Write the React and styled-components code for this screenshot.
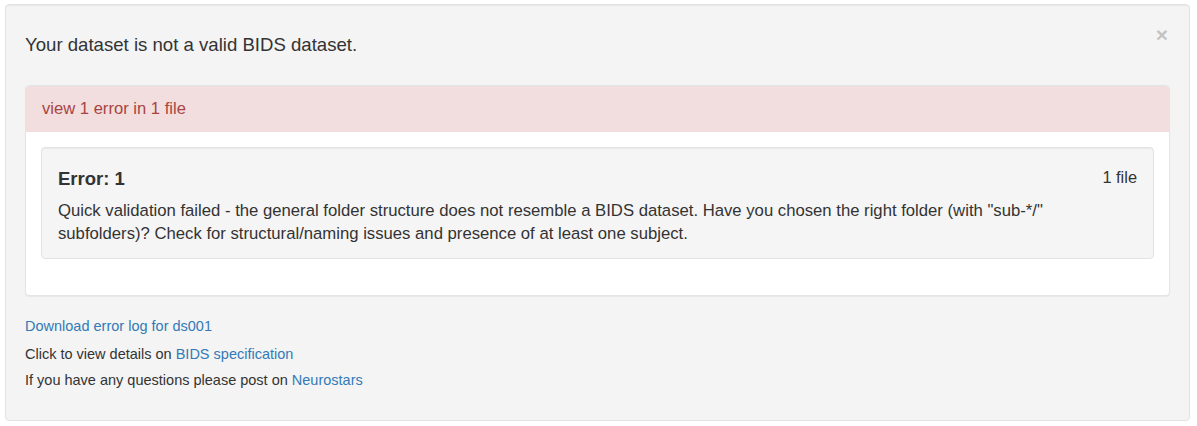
import React from "react";
import styled, { createGlobalStyle } from "styled-components";

const Global = createGlobalStyle`
  html, body { margin: 0; padding: 0; background: #fff; }
  body {
    font-family: "Liberation Sans", Arial, Helvetica, sans-serif;
    font-size: 16px;
    line-height: 1.42857;
    color: #333;
  }
`;

const Page = styled.div`
  padding: 4px 7px 6px 5px;
`;

const Well = styled.div`
  background: ${(p) => (p.$inner ? "#f5f5f5" : "#f4f4f4")};
  border: 1px solid #e3e3e3;
  border-radius: 4px;
  box-shadow: inset 0 1px 1px rgba(0, 0, 0, 0.05);
  padding: ${(p) => (p.$inner ? "16px 16px 13px" : "19px 19px 20px")};
  margin-bottom: ${(p) => (p.$inner ? "20px" : "0")};
`;

const TitleRow = styled.div`
  display: flex;
  justify-content: space-between;
  align-items: flex-start;
  margin: 10px 0 29px;
`;

const Title = styled.h4`
  margin: 0;
  font-size: 18.6px;
  font-weight: 400;
  line-height: 22px;
`;

const Close = styled.button`
  border: 0;
  background: none;
  padding: 0;
  margin: -10px 2px 0 0;
  font-family: inherit;
  font-size: 21px;
  font-weight: 700;
  line-height: 1;
  color: #000;
  opacity: 0.2;
  cursor: pointer;
`;

const Panel = styled.div`
  background: #fff;
  border: 1px solid #e4e4e4;
  border-radius: 4px;
  box-shadow: 0 1px 1px rgba(0, 0, 0, 0.05);
  overflow: hidden;
`;

const PanelHeading = styled.div`
  background: #f2dede;
  color: #a94442;
  padding: 11px 16px 11px;
  font-size: 16.6px;
  line-height: 23px;
  border-bottom: 1px solid #f2dede;
`;

const PanelBody = styled.div`
  padding: 15px 15px 16px;
`;

const ErrorHead = styled.div`
  display: flex;
  justify-content: space-between;
  align-items: flex-start;
  margin: 3px 0 8px;
`;

const ErrorTitle = styled.h4`
  margin: 0;
  font-size: 18.5px;
  font-weight: 700;
  line-height: 24px;
`;

const FileCount = styled.span`
  font-size: 16.4px;
  line-height: 20px;
`;

const Message = styled.p`
  margin: 0;
  padding-right: 12px;
  font-size: 16.7px;
  line-height: 23px;
`;

const Footer = styled.div`
  margin-top: 20px;
  font-size: 14.5px;
`;

const Line = styled.p`
  margin: 0 0 6px;
  line-height: 20px;
  &:nth-child(1) { margin-bottom: 8px; }
  &:last-child { margin-bottom: 10px; }
`;

const Link = styled.a`
  color: #337ab7;
  text-decoration: none;
`;

export default function App() {
  return (
    <>
      <Global />
      <Page>
        <Well>
          <TitleRow>
            <Title>Your dataset is not a valid BIDS dataset.</Title>
            <Close aria-label="Close">×</Close>
          </TitleRow>
          <Panel>
            <PanelHeading>view 1 error in 1 file</PanelHeading>
            <PanelBody>
              <Well $inner>
                <ErrorHead>
                  <ErrorTitle>Error: 1</ErrorTitle>
                  <FileCount>1 file</FileCount>
                </ErrorHead>
                <Message>
                  Quick validation failed - the general folder structure does not resemble a BIDS dataset. Have you
                  chosen the right folder (with "sub-*/" subfolders)? Check for structural/naming issues and presence
                  of at least one subject.
                </Message>
              </Well>
            </PanelBody>
          </Panel>
          <Footer>
            <Line>
              <Link href="#">Download error log for ds001</Link>
            </Line>
            <Line>
              Click to view details on <Link href="#">BIDS specification</Link>
            </Line>
            <Line>
              If you have any questions please post on <Link href="#">Neurostars</Link>
            </Line>
          </Footer>
        </Well>
      </Page>
    </>
  );
}
